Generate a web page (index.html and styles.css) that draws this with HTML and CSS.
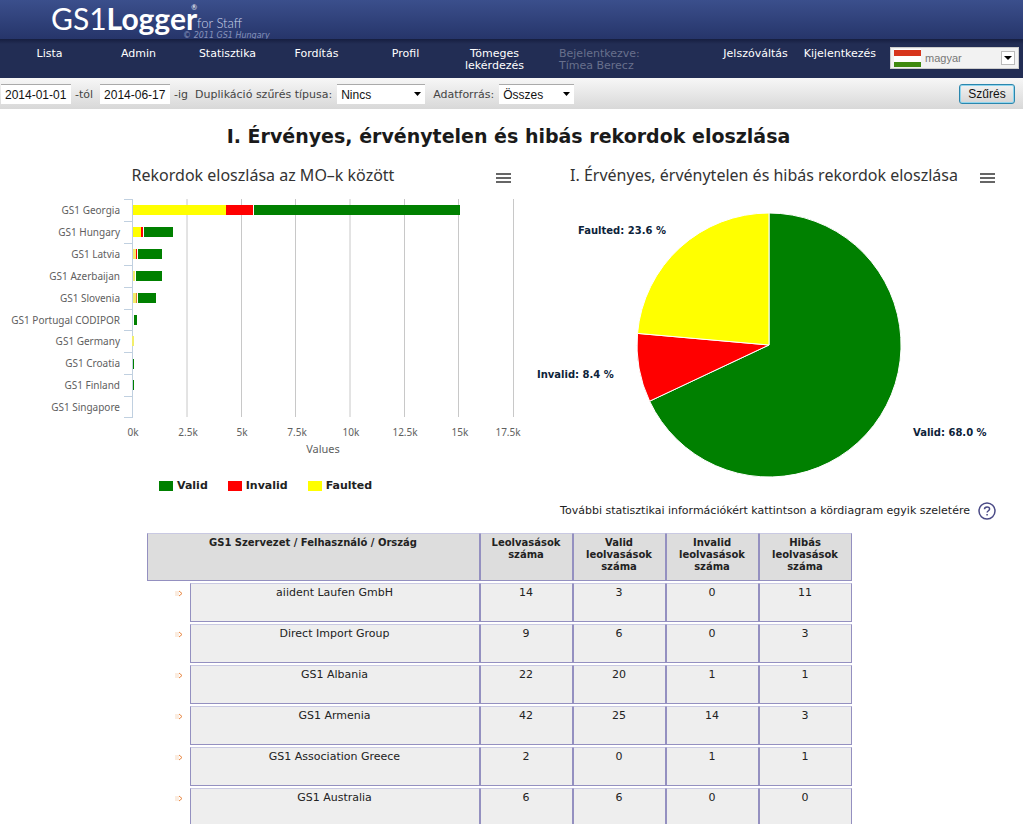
FILE: index.html
```html
<!DOCTYPE html>
<html lang="hu">
<head>
<meta charset="utf-8">
<title>GS1Logger for Staff</title>
<link rel="stylesheet" href="styles.css">
</head>
<body>
<header class="brand">
  <div class="logo"><span class="logo-name">GS1<b>Logger</b></span><span class="logo-reg">®</span></div>
  <div class="logo-side"><span class="logo-sub">for Staff</span><span class="logo-copy">© 2011 GS1 Hungary</span></div>
</header>
<nav class="nav">
  <div class="nav-main">
    <a href="#">Lista</a><a href="#">Admin</a><a href="#">Statisztika</a><a href="#">Fordítás</a><a href="#">Profil</a><a href="#">Tömeges lekérdezés</a>
  </div>
  <p class="nav-user">Bejelentkezve:<br>Tímea Berecz</p>
  <div class="nav-account"><a href="#">Jelszóváltás</a><a href="#">Kijelentkezés</a></div>
  <div class="lang">
    <svg class="flag" width="27" height="18" viewBox="0 0 27 18" aria-hidden="true"><path fill="#fff" d="M0 0h27v18H0z"/><path fill="#d7351c" d="M0 1h27v6H0z"/><path fill="#3f8a10" d="M0 13h27v5H0z"/></svg>
    <select class="lang-select" aria-label="Nyelv"><option>magyar</option></select>
    <span class="lang-arrow" aria-hidden="true"><svg width="8" height="4" viewBox="0 0 8 4"><path d="M0 0h8L4 4z"/></svg></span>
  </div>
</nav>
<form class="filter">
  <input class="date" id="from" type="text" value="2014-01-01"><label class="after" for="from">-tól</label>
  <input class="date" id="to" type="text" value="2014-06-17"><label class="after" for="to">-ig</label>
  <label class="before" for="dup">Duplikáció szűrés típusa:</label>
  <span class="pick"><select id="dup" class="pick-wide"><option>Nincs</option></select><svg class="pick-arrow" width="7" height="4" viewBox="0 0 7 4" aria-hidden="true"><path d="M0 0h7L3.500 4z"/></svg></span>
  <label class="before" for="src">Adatforrás:</label>
  <span class="pick"><select id="src"><option>Összes</option></select><svg class="pick-arrow" width="7" height="4" viewBox="0 0 7 4" aria-hidden="true"><path d="M0 0h7L3.500 4z"/></svg></span>
  <button class="submit" type="button">Szűrés</button>
</form>
<main class="page">
  <h1 class="title">I. Érvényes, érvénytelen és hibás rekordok eloszlása</h1>
  <div class="charts">
    <figure class="chart">
      <figcaption class="chart-title">Rekordok eloszlása az MO–k között</figcaption>
      <button class="burger" type="button" aria-label="Menü"><svg width="15" height="12" viewBox="0 0 15 12"><path d="M0 2h15M0 6h15M0 10h15"/></svg></button>
      <svg class="plot" viewBox="0 0 530 240">
        <path class="grid" d="M187 9v218M241.500 9v218M295.500 9v218M350 9v218M404.500 9v218M458.500 9v218M513.500 9v218"/>
        <path class="axis" d="M132.500 9v219M124 9.500h8M124 31.500h8M124 53.500h8M124 75.500h8M124 97.500h8M124 119.500h8M124 140.500h8M124 162.500h8M124 184.500h8M124 206.500h8M124 227.500h8"/>
        <path class="yellow" d="M133 15h93v10h-93zM133 37h8v10h-8z"/>
        <path class="pale" d="M133 59h3v10h-3zM133 81h2v10h-2zM133 103h4v10h-4zM132 146h2v10h-2z"/>
        <path class="red" d="M226 15h27v10h-27zM141 37h2v10h-2zM136 59h1v10h-1z"/>
        <path class="amber" d="M136 103h1v10h-1z"/>
        <path class="green" d="M254 15h206v10H254zM144 37h29v10h-29zM138 59h24v10h-24zM136 81h26v10h-26zM138 103h18v10h-18zM134 125h3v10h-3zM133 169h1v10h-1zM133 190h1v10h-1z"/>
        <g class="cats">
          <text x="120" y="24">GS1 Georgia</text><text x="120" y="46">GS1 Hungary</text><text x="120" y="68">GS1 Latvia</text><text x="120" y="90">GS1 Azerbaijan</text><text x="120" y="112">GS1 Slovenia</text><text x="120" y="134">GS1 Portugal CODIPOR</text><text x="120" y="155">GS1 Germany</text><text x="120" y="177">GS1 Croatia</text><text x="120" y="199">GS1 Finland</text><text x="120" y="221">GS1 Singapore</text>
        </g>
      </svg>
      <svg class="plot" viewBox="0 0 530 28">
        <g class="ticks">
          <text x="133" y="6">0k</text><text x="188" y="6">2.5k</text><text x="242" y="6">5k</text><text x="297" y="6">7.5k</text><text x="351" y="6">10k</text><text x="405" y="6">12.5k</text><text x="460" y="6">15k</text><text x="508" y="6">17.5k</text>
          <text class="axis-name" x="323" y="23">Values</text>
        </g>
      </svg>
      <ul class="legend"><li><i class="key key-green"></i>Valid</li><li><i class="key key-red"></i>Invalid</li><li><i class="key key-yellow"></i>Faulted</li></ul>
    </figure>
    <figure class="chart chart-pie">
      <figcaption class="chart-title">I. Érvényes, érvénytelen és hibás rekordok eloszlása</figcaption>
      <button class="burger" type="button" aria-label="Menü"><svg width="15" height="12" viewBox="0 0 15 12"><path d="M0 2h15M0 6h15M0 10h15"/></svg></button>
      <svg class="plot" viewBox="0 0 493 306">
        <g class="pie">
          <path class="green" d="M239 155V23A132 132 0 1 1 119.600 211.200Z"/>
          <path class="red" d="M239 155L119.600 211.200A132 132 0 0 1 107.500 143.400Z"/>
          <path class="yellow" d="M239 155L107.500 143.400A132 132 0 0 1 239 23Z"/>
        </g>
        <g class="slices"><text x="48" y="44">Faulted: 23.6 %</text><text x="7" y="188">Invalid: 8.4 %</text><text x="383" y="246">Valid: 68.0 %</text></g>
      </svg>
      <p class="hint">További statisztikai információkért kattintson a kördiagram egyik szeletére
        <svg width="18" height="18" viewBox="0 0 18 18" aria-hidden="true"><circle cx="9" cy="9" r="8"/><path d="M6.500 7.200C6.500 4.300 11.600 4.300 11.600 7C11.600 8.800 9.100 8.700 9.100 10.600M9.100 12v1.600"/></svg></p>
    </figure>
  </div>
  <div class="data-area">
  <table class="data">
    <colgroup><col class="c-mark"><col class="c-name"><col><col><col><col></colgroup>
    <thead><tr><th colspan="2">GS1 Szervezet / Felhasználó / Ország</th><th>Leolvasások száma</th><th>Valid leolvasások száma</th><th>Invalid leolvasások száma</th><th>Hibás leolvasások száma</th></tr></thead>
    <tbody>
      <tr><td class="mark"><svg width="8" height="7" viewBox="0 0 8 7"><path class="m1" d="M1 1v5M3 1v5"/><path class="m2" d="M4 1l3 2.500L4 6"/></svg></td><td>aiident Laufen GmbH</td><td>14</td><td>3</td><td>0</td><td>11</td></tr>
      <tr><td class="mark"><svg width="8" height="7" viewBox="0 0 8 7"><path class="m1" d="M1 1v5M3 1v5"/><path class="m2" d="M4 1l3 2.500L4 6"/></svg></td><td>Direct Import Group</td><td>9</td><td>6</td><td>0</td><td>3</td></tr>
      <tr><td class="mark"><svg width="8" height="7" viewBox="0 0 8 7"><path class="m1" d="M1 1v5M3 1v5"/><path class="m2" d="M4 1l3 2.500L4 6"/></svg></td><td>GS1 Albania</td><td>22</td><td>20</td><td>1</td><td>1</td></tr>
      <tr><td class="mark"><svg width="8" height="7" viewBox="0 0 8 7"><path class="m1" d="M1 1v5M3 1v5"/><path class="m2" d="M4 1l3 2.500L4 6"/></svg></td><td>GS1 Armenia</td><td>42</td><td>25</td><td>14</td><td>3</td></tr>
      <tr><td class="mark"><svg width="8" height="7" viewBox="0 0 8 7"><path class="m1" d="M1 1v5M3 1v5"/><path class="m2" d="M4 1l3 2.500L4 6"/></svg></td><td>GS1 Association Greece</td><td>2</td><td>0</td><td>1</td><td>1</td></tr>
      <tr><td class="mark"><svg width="8" height="7" viewBox="0 0 8 7"><path class="m1" d="M1 1v5M3 1v5"/><path class="m2" d="M4 1l3 2.500L4 6"/></svg></td><td>GS1 Australia</td><td>6</td><td>6</td><td>0</td><td>0</td></tr>
    </tbody>
  </table>
  </div>
</main>
</body>
</html>
```

FILE: styles.css
```css
* { box-sizing: border-box; }
body {
  margin: 0;
  height: 100vh;
  display: flex;
  flex-direction: column;
  background: #fff;
  color: #222;
  font: 11px/12px Verdana, "DejaVu Sans", sans-serif;
}

.brand {
  flex: none;
  height: 39px;
  display: flex;
  padding-left: 51px;
  color: #fff;
  background: linear-gradient(#3b4f8c, #26356a);
}
.logo { position: relative; font-family: Lato, sans-serif; }
.logo-name { font-size: 30px; line-height: 36px; }
.logo-name b { font-weight: 700; }
.logo-reg { position: absolute; top: 2px; right: 0; font-size: 7px; line-height: 10px; }
.logo-side { display: flex; flex-direction: column; padding-top: 15px; white-space: nowrap; }
.logo-sub { font: 300 13px/16px Lato, sans-serif; color: #ccd3ea; }
.logo-copy { margin-left: -14px; font: italic 8px/10px "DejaVu Sans", sans-serif; color: #8793bb; }

.nav {
  flex: none;
  height: 39px;
  display: flex;
  padding: 8px 4px 0 5px;
  background: linear-gradient(#161e40, #222d54 5px);
  color: #fff;
}
.nav a { color: #fff; text-decoration: none; }
.nav-main { display: flex; padding-top: 1px; }
.nav-main a { width: 89px; padding: 0 10px; text-align: center; }
.nav-user { margin: 1px 0 0 20px; color: #68708c; }
.nav-account { margin: 1px 14px 0 auto; display: flex; gap: 16px; }
.lang {
  position: relative;
  width: 129px;
  height: 22px;
  display: flex;
  align-items: center;
  padding: 1px 3px;
  background: #f2f2f2;
  border: 1px solid #ccc;
}
.lang-select {
  appearance: none;
  flex: 1;
  border: 0;
  padding: 0 4px;
  background: none;
  color: #777;
  font: 11px/16px "Liberation Sans", sans-serif;
}
.lang-arrow {
  width: 14px;
  height: 14px;
  display: grid;
  place-items: center;
  border: 1px solid #bbb;
  background: #fff;
  pointer-events: none;
}

.filter {
  flex: none;
  height: 31px;
  display: flex;
  align-items: center;
  padding: 1px 8px 0 1px;
  background: linear-gradient(#f7f7f7, #d8d8d8);
  color: #444;
}
.filter input, .filter select {
  height: 20px;
  border: 0;
  border-top: 1px solid #aaa;
  padding: 0 4px;
  background: #fff;
  color: #111;
  font: 12px/16px "Liberation Sans", sans-serif;
}
.filter .date { width: 70px; }
.after { margin: 2px 7px 0 4px; }
.before { margin: 2px 5px 0 0; }
.pick { position: relative; margin-right: 8px; }
.pick select { appearance: none; display: block; width: 75px; }
.pick .pick-wide { width: 88px; }
.pick-arrow { position: absolute; right: 4px; top: 8px; pointer-events: none; }
.submit {
  width: 56px;
  height: 20px;
  margin-left: auto;
  padding: 0;
  border: 1px solid #2b86ad;
  border-radius: 3px;
  box-shadow: inset 0 0 0 1px #8fd5ee;
  background: linear-gradient(#f2f2f2, #d6d6d6);
  color: #111;
  font: 12px/16px "Liberation Sans", sans-serif;
}

.page { flex: 1; min-height: 0; overflow-y: auto; scrollbar-width: none; }
.title { margin: 0; padding: 15px 6px 0 0; text-align: center; font-size: 19px; line-height: 24px; color: #1a1a1a; }
.charts { display: grid; grid-template-columns: 530fr 493fr; margin-top: 15px; }
.chart { position: relative; margin: 0; }
.chart-title {
  margin: 0 4px 3px 0;
  text-align: center;
  font: 16px/24px "Noto Sans", sans-serif;
  color: #333;
}
.chart-pie .chart-title { margin: 0 25px 3px 0; }
.burger { position: absolute; top: 9px; right: 19px; padding: 0; border: 0; background: none; line-height: 0; }
.chart-pie .burger { right: 28px; }
.burger path { stroke: #666; stroke-width: 2; }
.plot { display: block; width: 100%; overflow: visible; }
.plot text { font-family: "Noto Sans", sans-serif; fill: #606060; }
.grid { stroke: #c8c8c8; fill: none; }
.axis { stroke: #c0d0e0; fill: none; }
.yellow { fill: #ff0; }
.pale { fill: #f2ee6b; }
.amber { fill: #e08030; }
.red { fill: #f00; }
.green { fill: #008000; }
.cats { font-size: 10px; text-anchor: end; }
.ticks { font-size: 10px; text-anchor: middle; }
.axis-name { font-size: 11px; }
.legend {
  display: flex;
  gap: 20px;
  margin: 21px 0 0 159px;
  padding: 0;
  list-style: none;
  font-size: 11px;
  line-height: 14px;
  font-weight: 700;
}
.legend li { display: flex; align-items: center; }
.key { width: 14px; height: 10px; margin-right: 4px; }
.key-green { background: #008000; }
.key-red { background: #f00; }
.key-yellow { background: #ff0; }
.pie path { stroke: #fff; stroke-width: 1; }
.plot .slices text { font: 700 10px "DejaVu Sans", sans-serif; fill: #0d233a; }
.hint { display: flex; align-items: center; justify-content: flex-end; gap: 8px; margin: 6px 27px 0 0; white-space: nowrap; }
.hint svg { fill: none; stroke: #4a4a86; stroke-width: 1.500; }

.data-area { padding: 11px 25px 0 0; }
.data {
  width: 705px;
  margin: 0 auto;
  table-layout: fixed;
  border-collapse: separate;
  border-spacing: 0 2px;
  text-align: center;
}
.data col { width: 93px; }
.data .c-mark { width: 43px; }
.data .c-name { width: auto; }
.data th, .data td {
  padding: 3px 8px;
  vertical-align: top;
  border: 1px solid #9490c0;
  border-top-color: #c9c9e2;
}
.data th { height: 48px; font-size: 10px; background: #ddd; }
.data td { height: 39px; background: #eee; }
.data .mark { padding: 5px 7px 0 0; border: 0; background: none; text-align: right; }
.mark path { fill: none; }
.m1 { stroke: #f7d9c0; }
.m2 { stroke: #e8853f; }
```
